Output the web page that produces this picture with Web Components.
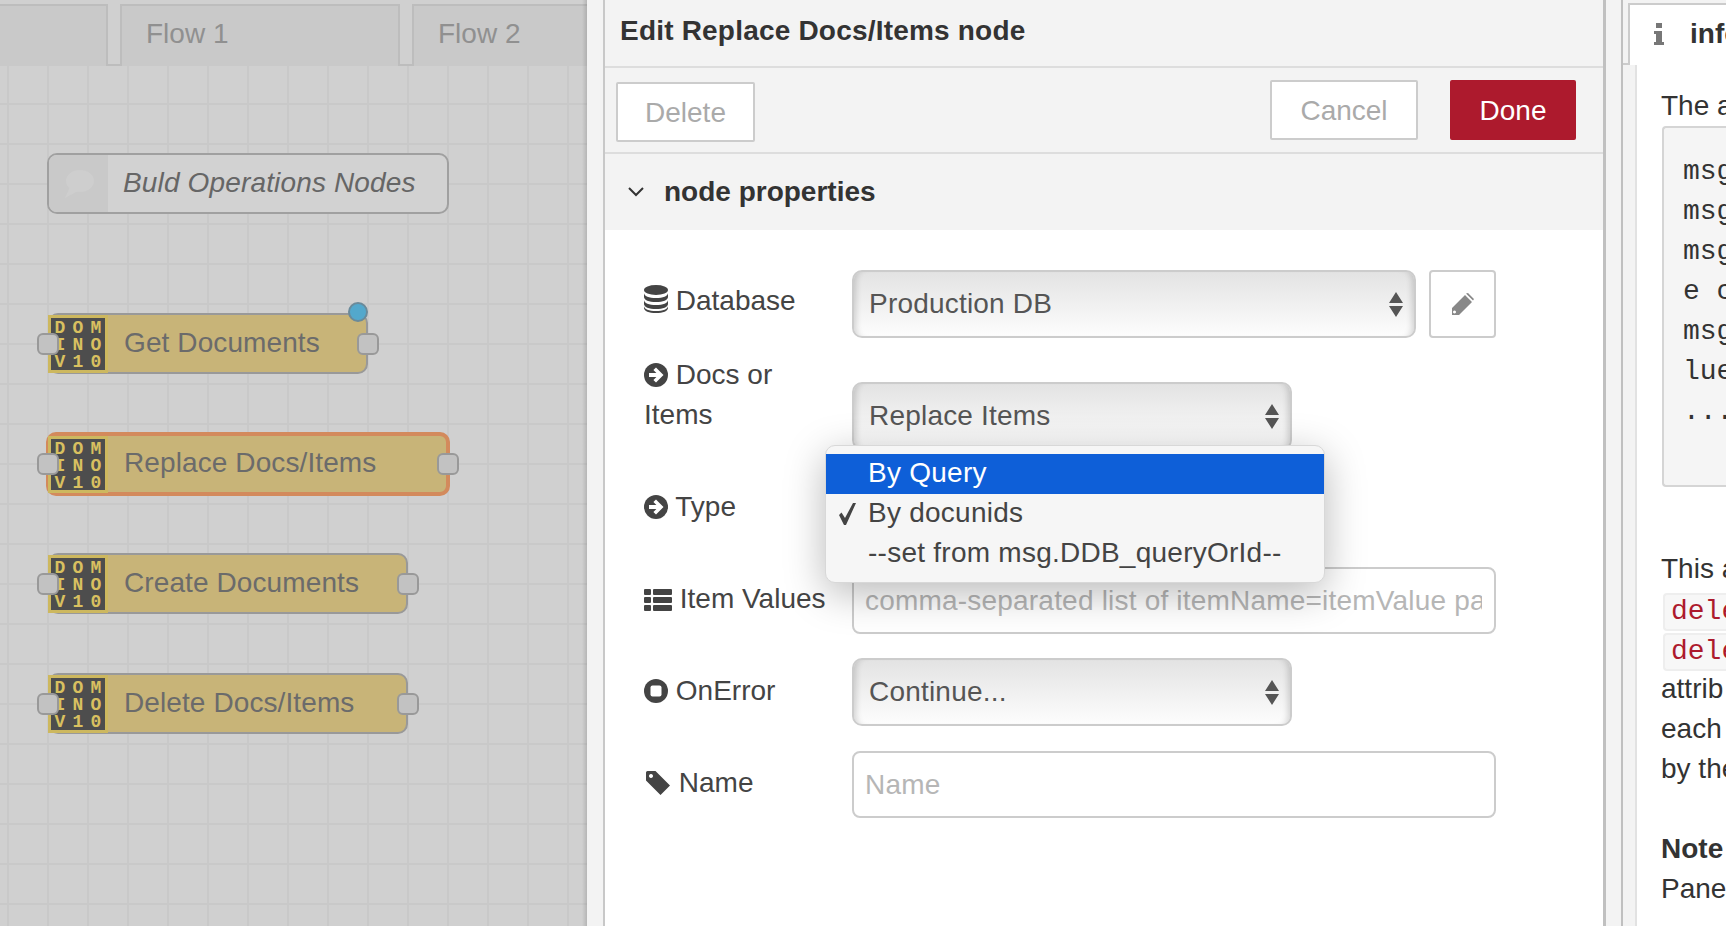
<!DOCTYPE html>
<html>
<head>
<meta charset="utf-8">
<style>
  html, body { margin: 0; height: 926px; overflow: hidden; background: #f3f3f3; }
  body { font: 28px/40px "Liberation Sans", Arial, sans-serif; color: #444; }
</style>
</head>
<body>
<editor-shell>
  <flow-canvas slot="canvas">
    <comment-node style="left:47px;top:87px;width:402px" label="Buld Operations Nodes"></comment-node>
    <flow-node style="left:48px;top:247px;width:320px" label="Get Documents" changed></flow-node>
    <flow-node style="left:46px;top:366px;width:404px" label="Replace Docs/Items" selected></flow-node>
    <flow-node style="left:48px;top:487px;width:360px" label="Create Documents"></flow-node>
    <flow-node style="left:48px;top:607px;width:360px" label="Delete Docs/Items"></flow-node>
  </flow-canvas>

  <edit-tray slot="tray" title="Edit Replace Docs/Items node">
    <form-row style="--label-top:11px;margin-top:40px">
      <span slot="label"><tray-icon name="database"></tray-icon> Database</span>
      <select-box style="width:564px">Production DB</select-box>
      <edit-button></edit-button>
    </form-row>
    <form-row style="--label-top:1px;--control-top:28px;--label-pad:40px;margin-top:16px">
      <span slot="label"><tray-icon name="arrow"></tray-icon> Docs or Items</span>
      <select-box style="width:440px">Replace Items</select-box>
      <drop-menu>
        <menu-entry active>By Query</menu-entry>
        <menu-entry checked>By docunids</menu-entry>
        <menu-entry>--set from msg.DDB_queryOrId--</menu-entry>
      </drop-menu>
    </form-row>
    <form-row style="--label-top:14px;margin-top:23px;height:68px">
      <span slot="label"><tray-icon name="arrow"></tray-icon> Type</span>
    </form-row>
    <form-row style="--label-top:12px;margin-top:26px">
      <span slot="label"><tray-icon name="list"></tray-icon> Item Values</span>
      <text-box style="width:644px">comma-separated list of itemName=itemValue pairs</text-box>
    </form-row>
    <form-row style="--label-top:13px;margin-top:24px">
      <span slot="label"><tray-icon name="stop"></tray-icon> OnError</span>
      <select-box style="width:440px">Continue...</select-box>
    </form-row>
    <form-row style="--label-top:12px;margin-top:25px">
      <span slot="label"><tray-icon name="tag"></tray-icon> Name</span>
      <text-box style="width:644px">Name</text-box>
    </form-row>
  </edit-tray>

  <info-sidebar slot="sidebar">
    <p style="margin:21px 0 0">The a</p>
    <code-block>
      <div>msg</div>
      <div>msg</div>
      <div>msg</div>
      <div>e c</div>
      <div>msg</div>
      <div>lue</div>
      <div>...</div>
    </code-block>
    <p style="margin:62px 0 0">This a<br><code-tag>dele</code-tag><br><code-tag>dele</code-tag><br>attrib<br>each<br>by the</p>
    <p style="margin:40px 0 0"><b style="color:#333">Note</b><br>Pane</p>
  </info-sidebar>
</editor-shell>

<script>
  const ICONS = {
    database: `<svg width="24" height="28" viewBox="0 0 24 28" fill="#444"><ellipse cx="12" cy="5" rx="12" ry="5"/><path d="M0 8c0 3 5 5 12 5s12-2 12-5v4c0 3-5 5-12 5S0 15 0 12z"/><path d="M0 15c0 3 5 5 12 5s12-2 12-5v4c0 3-5 5-12 5S0 22 0 19z"/><path d="M0 21c0 3 5 5 12 5s12-2 12-5v2c0 3-5 5-12 5S0 26 0 23z"/></svg>`,
    arrow: `<svg width="24" height="24" viewBox="0 0 24 24"><circle cx="12" cy="12" r="12" fill="#444"/><path fill="#fff" d="M12 4.500l7.500 7.500-7.500 7.500-2.600-2.600 3-3H5v-3.800h7.400l-3-3z"/></svg>`,
    list: `<svg width="28" height="22" viewBox="0 0 28 22" fill="#444"><rect width="7" height="6" rx="1"/><rect x="9" width="19" height="6" rx="1"/><rect y="8" width="7" height="6" rx="1"/><rect x="9" y="8" width="19" height="6" rx="1"/><rect y="16" width="7" height="6" rx="1"/><rect x="9" y="16" width="19" height="6" rx="1"/></svg>`,
    stop: `<svg width="24" height="24" viewBox="0 0 24 24"><circle cx="12" cy="12" r="12" fill="#444"/><rect x="6.500" y="6.500" width="11" height="11" rx="2" fill="#fff"/></svg>`,
    tag: `<svg width="27" height="26" viewBox="0 0 27 26"><path fill="#444" fill-rule="evenodd" d="M2 3.500Q2 2 3.500 2h8L26 16.500 16.500 26 2 11.500zM7 5a2 2 0 1 0 .01 0z"/></svg>`,
  };

  class EditorShell extends HTMLElement {
    constructor() {
      super();
      this.attachShadow({ mode: "open" }).innerHTML = `
        <style>
          :host { display: flex; height: 926px; background: #f3f3f3; }
          .canvas { flex: 0 0 587px; display: flex; }
          .tray { flex: 0 0 1003px; margin-left: 16px; display: flex; }
          .sidebar { flex: 1; margin-left: 15px; display: flex; min-width: 0; }
        </style>
        <div class="canvas"><slot name="canvas"></slot></div>
        <div class="tray"><slot name="tray"></slot></div>
        <div class="sidebar"><slot name="sidebar"></slot></div>`;
    }
  }
  customElements.define("editor-shell", EditorShell);

  class FlowCanvas extends HTMLElement {
    constructor() {
      super();
      this.attachShadow({ mode: "open" }).innerHTML = `
        <style>
          :host { display: flex; flex-direction: column; flex: 1; position: relative; overflow: hidden; background: #d0d0d0; }
          :host::after { content: ""; position: absolute; top: 0; bottom: 0; right: 0; width: 5px;
            background: linear-gradient(to right, rgba(0,0,0,0), rgba(0,0,0,.13)); }
          .tabs { flex: 0 0 62px; box-sizing: border-box; margin-top: 4px; display: flex; gap: 12px; color: #909090;
            border-bottom: 2px solid #bdbdbd; }
          .tab { box-sizing: border-box; margin-bottom: -2px; background: #c9c9c9; border: 2px solid #bdbdbd; border-bottom: 0;
            line-height: 55px; padding-left: 24px; }
          .first { width: 108px; border-left: 0; }
          .flow1 { width: 280px; }
          .flow2 { flex: 1; border-right: 0; }
          .sheet { flex: 1; position: relative;
            background-image: linear-gradient(to right, #c9c9c9 2px, transparent 2px), linear-gradient(to bottom, #c9c9c9 2px, transparent 2px);
            background-size: 40px 40px; background-position: 7px 0, 0 37px; }
        </style>
        <div class="tabs">
          <div class="tab first"></div>
          <div class="tab flow1">Flow 1</div>
          <div class="tab flow2">Flow 2</div>
        </div>
        <div class="sheet"><slot></slot></div>`;
    }
  }
  customElements.define("flow-canvas", FlowCanvas);

  class CommentNode extends HTMLElement {
    constructor() {
      super();
      this.attachShadow({ mode: "open" }).innerHTML = `
        <style>
          :host { display: block; position: absolute; height: 61px; }
          .box { box-sizing: border-box; height: 100%; display: flex; align-items: center; background: #d2d2d2;
            border: 2px solid #a0a0a0; border-radius: 10px; overflow: hidden; color: #666; font-style: italic; }
          .icon { flex: 0 0 59px; align-self: stretch; background: #c9c9c9; display: flex; align-items: center; justify-content: center; }
          .label { margin-left: 15px; padding-bottom: 2px; white-space: nowrap; letter-spacing: .15px; }
        </style>
        <div class="box">
          <div class="icon">
            <svg width="30" height="28" viewBox="0 0 30 28" fill="#cecece"><ellipse cx="16" cy="11" rx="14" ry="11"/><path d="M6 17L1 28l13-7z"/></svg>
          </div>
          <div class="label">${this.getAttribute("label")}</div>
        </div>`;
    }
  }
  customElements.define("comment-node", CommentNode);

  class FlowNode extends HTMLElement {
    get selected() {
      return this.hasAttribute("selected");
    }
    get changed() {
      return this.hasAttribute("changed");
    }
    constructor() {
      super();
      const glyphs = "DOMINOV10".split("").map(c => `<span>${c}</span>`).join("");
      const bw = this.selected ? 4 : 2;
      this.attachShadow({ mode: "open" }).innerHTML = `
        <style>
          :host { display: block; position: absolute; height: ${this.selected ? 64 : 61}px; }
          .box { box-sizing: border-box; height: 100%; display: flex; align-items: center; background: #c8b478;
            border: ${bw}px solid ${this.selected ? "#d38a5c" : "#999"}; border-radius: 10px; color: #6b6b6b; }
          .icon { box-sizing: border-box; flex: 0 0 60px; align-self: stretch; margin-left: -2px; margin-bottom: -1px;
            background: #4d4d4d; border: 3px solid #cdb85f; display: grid; grid-template-columns: repeat(3, 1fr);
            align-items: center; justify-items: center; padding: 2px 0 1px 0;
            font: bold 18px/17px "Liberation Mono", monospace; color: #d8c060; }
          .label { margin-left: 16px; padding-bottom: 2px; white-space: nowrap; letter-spacing: .1px; }
          .port { position: absolute; top: 50%; margin-top: -11px; box-sizing: border-box; width: 22px; height: 22px;
            background: #c2c2c2; border: 2px solid #999; border-radius: 6px; }
          .in { left: ${this.selected ? -9 : -11}px; }
          .out { right: ${this.selected ? -9 : -11}px; }
          .dot { position: absolute; left: 300px; top: -11px; box-sizing: border-box; width: 20px; height: 20px;
            background: #53a8cc; border: 2px solid #6a8a9a; border-radius: 50%; }
        </style>
        <div class="box">
          <div class="icon">${glyphs}</div>
          <div class="label">${this.getAttribute("label")}</div>
        </div>
        <div class="port in"></div>
        <div class="port out"></div>
        ${this.changed ? `<div class="dot"></div>` : ""}`;
    }
  }
  customElements.define("flow-node", FlowNode);

  class EditTray extends HTMLElement {
    constructor() {
      super();
      this.attachShadow({ mode: "open" }).innerHTML = `
        <style>
          :host { display: flex; flex-direction: column; flex: 1; box-sizing: border-box; background: #f3f3f3;
            border-left: 2px solid #c8c8c8; border-right: 3px solid #c0c0c0; color: #333; }
          .title { height: 66px; box-sizing: border-box; padding: 11px 0 0 15px; font-weight: bold; white-space: nowrap; letter-spacing: .2px; }
          .buttons { height: 88px; box-sizing: border-box; border-top: 2px solid #ddd; border-bottom: 2px solid #ddd;
            display: flex; align-items: flex-start; }
          .btn { box-sizing: border-box; height: 60px; line-height: 58px; text-align: center; background: #fff;
            border: 2px solid #ccc; border-radius: 2px; color: #aaa; }
          .delete { width: 139px; margin: 14px 0 0 11px; }
          .cancel { width: 148px; margin: 12px 0 0 auto; }
          .done { width: 126px; margin: 12px 27px 0 32px; background: #ad1a2d; border-color: #ad1a2d; color: #fff; }
          .section { height: 76px; box-sizing: border-box; display: flex; align-items: center; font-weight: bold; padding-left: 23px; gap: 20px; }
          .body { flex: 1; background: #fff; position: relative; }
        </style>
        <div class="title">${this.getAttribute("title")}</div>
        <div class="buttons">
          <div class="btn delete">Delete</div>
          <div class="btn cancel">Cancel</div>
          <div class="btn done">Done</div>
        </div>
        <div class="section">
          <svg width="16" height="10" viewBox="0 0 16 10" fill="none" stroke="#333" stroke-width="2"><path d="M1 1l7 7 7-7"/></svg>
          <span>node properties</span>
        </div>
        <div class="body"><slot></slot></div>`;
    }
  }
  customElements.define("edit-tray", EditTray);

  class FormRow extends HTMLElement {
    constructor() {
      super();
      this.attachShadow({ mode: "open" }).innerHTML = `
        <style>
          :host { display: flex; align-items: flex-start; padding-left: 39px; position: relative; color: #444; }
          .label { box-sizing: border-box; flex: 0 0 208px; margin-top: var(--label-top, 0px); padding-right: var(--label-pad, 0px); }
          .control { display: flex; gap: 13px; margin-top: var(--control-top, 0px); }
        </style>
        <div class="label"><slot name="label"></slot></div>
        <div class="control"><slot></slot></div>`;
    }
  }
  customElements.define("form-row", FormRow);

  class TrayIcon extends HTMLElement {
    constructor() {
      super();
      this.attachShadow({ mode: "open" }).innerHTML = `
        <style>
          :host { display: inline-block; vertical-align: -3px; line-height: 0; }
        </style>
        ${ICONS[this.getAttribute("name")]}`;
    }
  }
  customElements.define("tray-icon", TrayIcon);

  class SelectBox extends HTMLElement {
    constructor() {
      super();
      this.attachShadow({ mode: "open" }).innerHTML = `
        <style>
          :host { display: flex; align-items: center; justify-content: space-between; box-sizing: border-box; height: 68px;
            padding: 0 11px 0 15px; border: 2px solid #ccc; border-radius: 10px; color: #555; white-space: nowrap; letter-spacing: .2px;
            background: linear-gradient(to bottom, #e3e3e3, #fdfdfd);
            box-shadow: inset 7px 0 6px -5px rgba(0,0,0,.16), inset -7px 0 6px -5px rgba(0,0,0,.16); }
        </style>
        <span><slot></slot></span>
        <svg width="14" height="25" viewBox="0 0 14 25" fill="#555"><path d="M7 0l7 11H0zM0 14h14L7 25z"/></svg>`;
    }
  }
  customElements.define("select-box", SelectBox);

  class TextBox extends HTMLElement {
    constructor() {
      super();
      this.attachShadow({ mode: "open" }).innerHTML = `
        <style>
          :host { display: block; box-sizing: border-box; height: 67px; padding: 12px 12px 0 11px; border: 2px solid #ccc;
            border-radius: 8px; background: #fff; color: #b6b6b6; overflow: hidden; white-space: nowrap; letter-spacing: .2px; }
          .clip { overflow: hidden; }
        </style>
        <div class="clip"><slot></slot></div>`;
    }
  }
  customElements.define("text-box", TextBox);

  class EditButton extends HTMLElement {
    constructor() {
      super();
      this.attachShadow({ mode: "open" }).innerHTML = `
        <style>
          :host { display: flex; align-items: center; justify-content: center; box-sizing: border-box; width: 67px; height: 68px;
            border: 2px solid #ccc; border-radius: 4px; background: #fff; }
        </style>
        <svg width="22" height="22" viewBox="0 0 22 22"><path fill="#888" fill-rule="evenodd" d="M0 22v-7L13 2l7 7L7 22zM16 0l6 6-1 1.500-7-7zM2.500 17.500a1.500 1.500 0 1 0 .01 0z"/></svg>`;
    }
  }
  customElements.define("edit-button", EditButton);

  class DropMenu extends HTMLElement {
    constructor() {
      super();
      this.attachShadow({ mode: "open" }).innerHTML = `
        <style>
          :host { display: block; position: absolute; left: 220px; top: 91px; z-index: 5; width: 500px; box-sizing: border-box;
            padding: 8px 0; background: #f6f6f6; border-radius: 10px; border: 1px solid #d8d8d8;
            box-shadow: 0 10px 40px rgba(0,0,0,.28); }
        </style>
        <slot></slot>`;
    }
  }
  customElements.define("drop-menu", DropMenu);

  class MenuEntry extends HTMLElement {
    get active() {
      return this.hasAttribute("active");
    }
    get checked() {
      return this.hasAttribute("checked");
    }
    constructor() {
      super();
      this.attachShadow({ mode: "open" }).innerHTML = `
        <style>
          :host { display: flex; align-items: center; height: 40px; color: ${this.active ? "#fff" : "#444"};
            background: ${this.active ? "#0e5fd8" : "transparent"}; white-space: nowrap; letter-spacing: .25px; }
          .tick { flex: 0 0 42px; display: flex; justify-content: flex-end; padding-right: 12px; box-sizing: border-box; }
          span { padding-bottom: 2px; }
        </style>
        <div class="tick">${this.checked ? `<svg width="17" height="22" viewBox="0 0 17 22"><path fill="#444" d="M0 12l2.500-2.500L6 15 14 0h3L7 22H5z"/></svg>` : ""}</div>
        <span><slot></slot></span>`;
    }
  }
  customElements.define("menu-entry", MenuEntry);

  class InfoSidebar extends HTMLElement {
    constructor() {
      super();
      this.attachShadow({ mode: "open" }).innerHTML = `
        <style>
          :host { display: flex; flex-direction: column; flex: 1; min-width: 0; border-left: 2px solid #c0c0c0; color: #333; overflow: hidden; }
          .tabs { flex: 0 0 65px; display: flex; box-sizing: border-box; }
          .foot { flex: 0 0 5px; border-bottom: 2px solid #ccc; }
          .tab { flex: 1; box-sizing: border-box; margin-top: 3px; background: #fff; border: 2px solid #ccc; border-bottom: 0;
            border-right: 0; display: flex; align-items: center; padding: 0 0 2px 24px; gap: 26px; font-weight: bold; }
          .main { flex: 1; display: flex; }
          .gutter { flex: 0 0 12px; }
          .content { flex: 1; background: #fff; border-left: 2px solid #e2e2e2; padding-left: 24px; white-space: nowrap; overflow: hidden; }
        </style>
        <div class="tabs">
          <div class="foot"></div>
          <div class="tab">
            <svg width="10" height="22" viewBox="0 0 10 22" fill="#777"><rect x="2" width="6" height="5"/><path d="M0 8h8v11h2v3H0v-3h2v-8H0z"/></svg>
            <span>info</span>
          </div>
        </div>
        <div class="main">
          <div class="gutter"></div>
          <div class="content"><slot></slot></div>
        </div>`;
    }
  }
  customElements.define("info-sidebar", InfoSidebar);

  class CodeBlock extends HTMLElement {
    constructor() {
      super();
      this.attachShadow({ mode: "open" }).innerHTML = `
        <style>
          :host { display: block; box-sizing: border-box; height: 361px; margin-left: 1px; padding: 24px 0 0 19px; background: #f5f5f5;
            border: 2px solid #d5d5d5; border-right: 0; border-radius: 4px 0 0 4px; font: 28px/40px "Liberation Mono", monospace;
            color: #333; }
        </style>
        <slot></slot>`;
    }
  }
  customElements.define("code-block", CodeBlock);

  class CodeTag extends HTMLElement {
    constructor() {
      super();
      this.attachShadow({ mode: "open" }).innerHTML = `
        <style>
          :host { display: inline-block; box-sizing: border-box; height: 38px; width: 100px; margin: 4px 0 -2px 2px; padding-left: 6px;
            background: #f7f7f7; border: 2px solid #eee; border-right: 0; border-radius: 4px 0 0 4px; color: #ad1a2d;
            font: 28px/34px "Liberation Mono", monospace; vertical-align: top; }
        </style>
        <slot></slot>`;
    }
  }
  customElements.define("code-tag", CodeTag);
</script>
</body>
</html>
